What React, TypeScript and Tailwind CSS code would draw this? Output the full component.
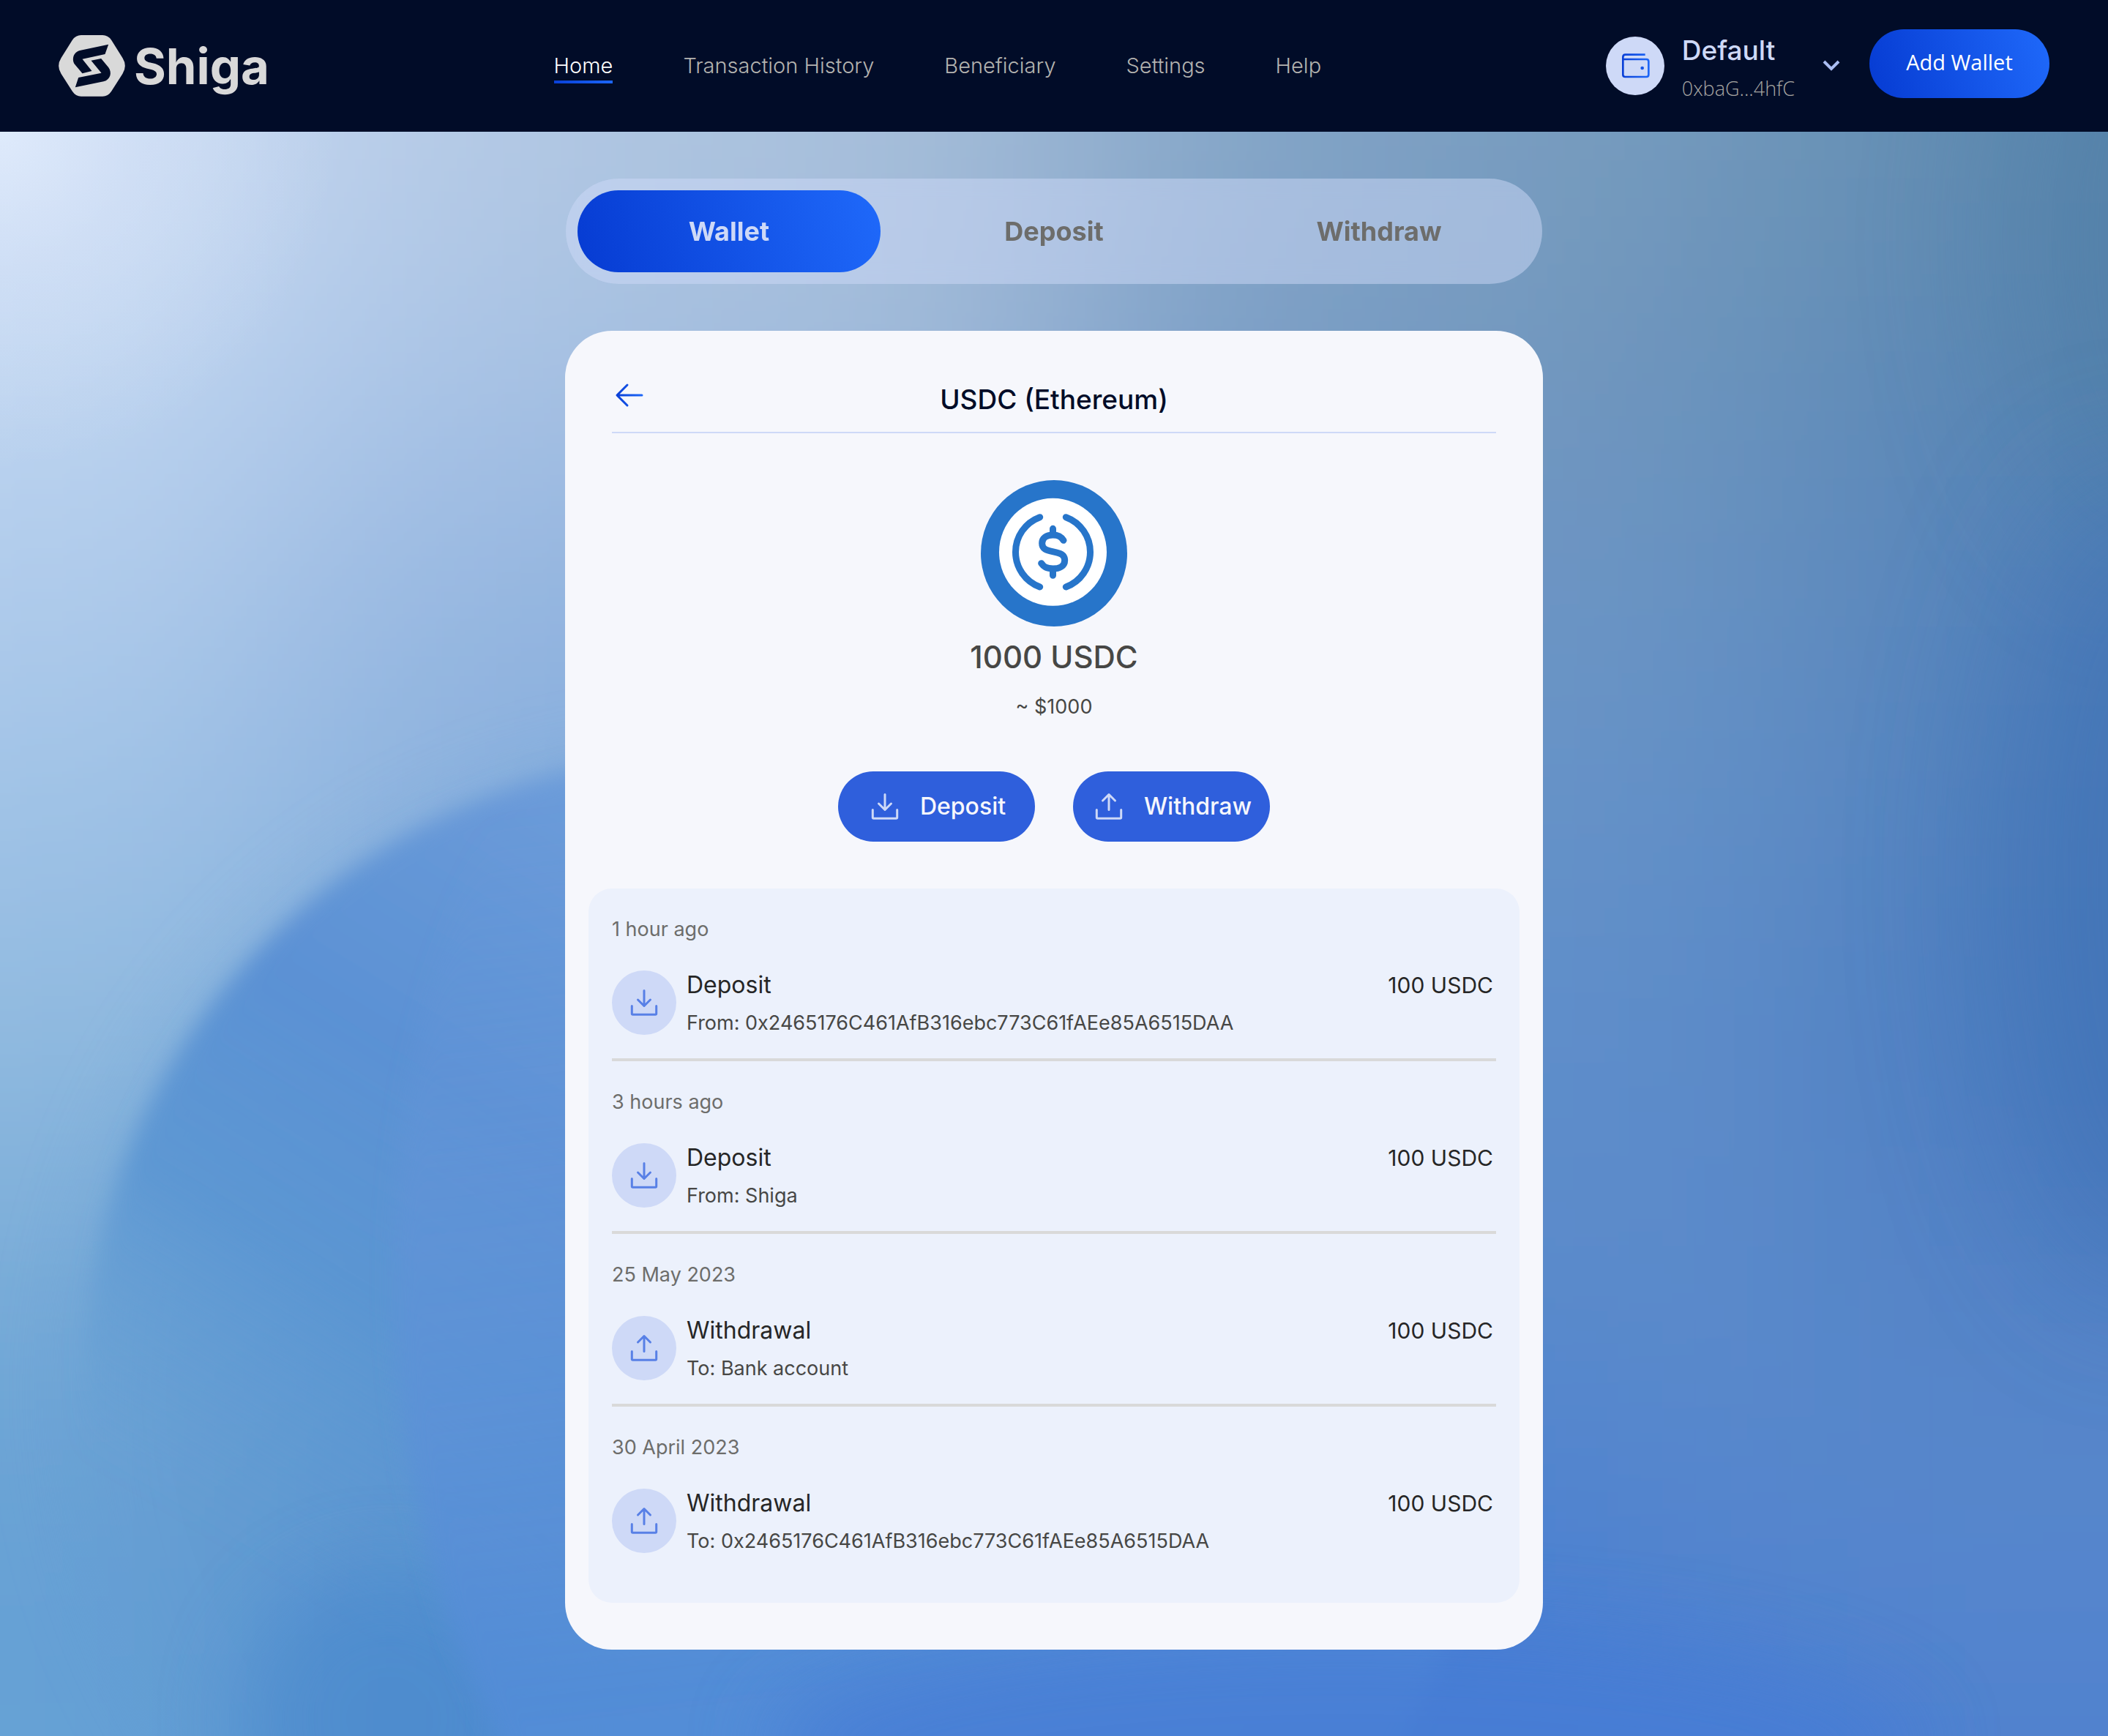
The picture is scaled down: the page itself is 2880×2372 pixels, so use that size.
import React from "react";

type Kind = "deposit" | "withdraw";

interface Activity {
  when: string;
  kind: Kind;
  title: string;
  detail: string;
  amount: string;
}

const NAV_ITEMS = ["Home", "Transaction History", "Beneficiary", "Settings", "Help"];

const TABS = ["Wallet", "Deposit", "Withdraw"];

const ACTIVITY: Activity[] = [
  {
    when: "1 hour ago",
    kind: "deposit",
    title: "Deposit",
    detail: "From: 0x2465176C461AfB316ebc773C61fAEe85A6515DAA",
    amount: "100 USDC",
  },
  {
    when: "3 hours ago",
    kind: "deposit",
    title: "Deposit",
    detail: "From: Shiga",
    amount: "100 USDC",
  },
  {
    when: "25 May 2023",
    kind: "withdraw",
    title: "Withdrawal",
    detail: "To: Bank account",
    amount: "100 USDC",
  },
  {
    when: "30 April 2023",
    kind: "withdraw",
    title: "Withdrawal",
    detail: "To: 0x2465176C461AfB316ebc773C61fAEe85A6515DAA",
    amount: "100 USDC",
  },
];

/* Colour mesh behind the page: each row runs left to right, rows run top to bottom. */
const MESH = [
  ["#cbdcf4", "#b8cce7", "#aec5e0", "#a6bdd9", "#88a9c9", "#7c9fc2", "#7299bb", "#608bb0"],
  ["#bfd5f0", "#abc6e8", "#a6c0e0", "#a2bbd9", "#7c9fc8", "#769abf", "#6b93bb", "#5a87b4"],
  ["#afcbeb", "#99b8e0", "#90b2e0", "#8fb0dc", "#7a9ecb", "#6e96c4", "#6792c2", "#5583ba"],
  ["#9fc2e6", "#8cb2df", "#84aede", "#78a2d8", "#7099cf", "#6893c8", "#6290c8", "#5080bd"],
  ["#8fb9df", "#80addb", "#6c9cd8", "#6a98d4", "#6292d0", "#5f8ecb", "#5c8bc9", "#4c7cc0"],
  ["#78acd8", "#6099d4", "#5a90d6", "#588cd2", "#568ace", "#5a8aca", "#5d8ccb", "#5282c6"],
  ["#66a0d4", "#5692d2", "#5088d4", "#4c84d4", "#487fd4", "#4c82d2", "#5686cc", "#5988cc"],
  ["#66a2d6", "#4f8dd0", "#508ad6", "#4a82d6", "#477ed6", "#457cd3", "#4a7fd2", "#5081cf"],
];

function Backdrop() {
  return (
    <svg
      aria-hidden="true"
      className="absolute inset-0 h-full w-full"
      viewBox="0 0 1568 1193"
      preserveAspectRatio="none"
    >
      <defs>
        <filter id="meshBlur" filterUnits="userSpaceOnUse" x="-500" y="-500" width="2568" height="2193">
          <feGaussianBlur stdDeviation="95" />
        </filter>
        <filter id="edgeBlur" x="-20%" y="-20%" width="140%" height="140%">
          <feGaussianBlur stdDeviation="8" />
        </filter>
        <filter id="wideBlur" x="-50%" y="-50%" width="200%" height="200%">
          <feGaussianBlur stdDeviation="30" />
        </filter>
        <filter id="sideBlur" filterUnits="userSpaceOnUse" x="1200" y="-400" width="700" height="1700">
          <feGaussianBlur stdDeviation="55" />
        </filter>
        <radialGradient id="corner" gradientUnits="userSpaceOnUse" cx="0" cy="0" r="250">
          <stop offset="0" stopColor="#e4eefd" stopOpacity="0.8" />
          <stop offset="0.4" stopColor="#dfe9fb" stopOpacity="0.4" />
          <stop offset="1" stopColor="#dfe9fb" stopOpacity="0" />
        </radialGradient>
        <linearGradient id="orb" gradientUnits="userSpaceOnUse" x1="420" y1="470" x2="60" y2="1060">
          <stop offset="0" stopColor="#6d9cda" />
          <stop offset="0.35" stopColor="#5b91d4" />
          <stop offset="0.6" stopColor="#5894d2" stopOpacity="0.85" />
          <stop offset="0.9" stopColor="#5f9cd2" stopOpacity="0" />
        </linearGradient>
        <linearGradient id="innerOrb" gradientUnits="userSpaceOnUse" x1="300" y1="520" x2="380" y2="1190">
          <stop offset="0" stopColor="#6a99dc" stopOpacity="0" />
          <stop offset="0.4" stopColor="#6393d9" stopOpacity="0.5" />
          <stop offset="1" stopColor="#528cd7" stopOpacity="0.95" />
        </linearGradient>
      </defs>
      <g filter="url(#meshBlur)">
        {MESH.map((row, r) =>
          row.map((color, c) => {
            const left = c === 0 ? -500 : c * 196;
            const right = c === 7 ? 2068 : (c + 1) * 196;
            const top = r === 0 ? -500 : -85 + r * 170;
            const bottom = r === 7 ? 1693 : 85 + r * 170;
            return (
              <rect
                key={`${r}-${c}`}
                x={left}
                y={top}
                width={right - left + 1}
                height={bottom - top + 1}
                fill={color}
              />
            );
          }),
        )}
      </g>
      <rect width="260" height="260" fill="url(#corner)" />
      <ellipse cx="1610" cy="80" rx="110" ry="230" fill="#4c7aa2" opacity="0.5" filter="url(#sideBlur)" />
      <ellipse cx="1600" cy="560" rx="110" ry="300" fill="#3d6fb4" opacity="0.6" filter="url(#sideBlur)" />
      <circle cx="525" cy="938" r="474" fill="#669bd0" opacity="0.28" filter="url(#wideBlur)" />
      <circle cx="532" cy="933" r="470" fill="url(#orb)" filter="url(#edgeBlur)" />
      <ellipse cx="290" cy="1180" rx="110" ry="110" fill="#4486cc" opacity="0.5" filter="url(#wideBlur)" />
      <ellipse cx="708" cy="850" rx="415" ry="590" fill="url(#innerOrb)" filter="url(#edgeBlur)" />
      <ellipse cx="1000" cy="1200" rx="430" ry="90" fill="#467dd5" opacity="0.8" filter="url(#wideBlur)" />
    </svg>
  );
}

function ShigaMark() {
  return (
    <svg aria-hidden="true" className="h-[84px] w-[91px]" viewBox="60 84 272 252">
      <path
        fill="#d9d9d9"
        d="M152 84H240Q262 84 276 104L322 178Q342 210 322 242L276 314Q262 335 240 335H152Q130 335 116 314L70 242Q50 210 70 178L116 104Q130 84 152 84Z"
      />
      <path
        fill="#010c28"
        d="M264 122L250 162L157 182L196 231L157 241L126 204C114 188 116 153 150 146Z"
      />
      <path
        fill="#010c28"
        d="M128 298L141 258L235 239L193 188L234 180L264 216C280 238 272 267 244 274Z"
      />
    </svg>
  );
}

function WalletGlyph() {
  return (
    <svg aria-hidden="true" className="h-10 w-11" viewBox="66 90 132 120" fill="none">
      <defs>
        <linearGradient id="walletStroke" gradientUnits="userSpaceOnUse" x1="78" y1="0" x2="192" y2="0">
          <stop offset="0" stopColor="#0a3fd6" />
          <stop offset="1" stopColor="#1e68f8" />
        </linearGradient>
      </defs>
      <path
        d="M173 104H92Q82 104 82 114V186Q82 195 91 195H178Q187 195 187 186V132Q187 123 178 123H84"
        stroke="url(#walletStroke)"
        strokeWidth="8"
      />
      <circle cx="161" cy="159" r="7" fill="#1455e8" />
    </svg>
  );
}

function TrayIcon({ kind, className }: { kind: Kind; className: string }) {
  return (
    <svg
      aria-hidden="true"
      className={className}
      viewBox="0 0 48 48"
      fill="none"
      stroke="currentColor"
      strokeLinecap="round"
      strokeLinejoin="round"
    >
      <path d="M7.3 28.5V39Q7.3 40.3 8.6 40.3H39.4Q40.7 40.3 40.7 39V28.5" />
      {kind === "deposit" ? (
        <path d="M24 7.5V28M15.5 20L24 28.5L32.5 20" />
      ) : (
        <path d="M24 28.5V8M15.5 16L24 7.5L32.5 16" />
      )}
    </svg>
  );
}

function UsdcLogo() {
  return (
    <svg role="img" aria-label="USDC" className="size-[200px]" viewBox="120 78 600 600" fill="none">
      <circle cx="420" cy="378" r="300" fill="#2775ca" />
      <circle cx="415.5" cy="373" r="220.5" fill="#fff" />
      <g stroke="#2775ca" strokeWidth="27" strokeLinecap="round" strokeLinejoin="round">
        <path d="M362 230A152.500 152.500 0 0 0 362 516" />
        <path d="M469 230A152.500 152.500 0 0 1 469 516" />
        <path d="M459 325C449 309 438 303 415 303C388 303 371 316 371 337C371 360 388 366 417 371.500C446 377 464 384 464 407C464 430 442 441 416 441C388 441 378 433 368 419" />
        <path d="M415.500 277V300M415.500 444V469" />
      </g>
    </svg>
  );
}

function Header() {
  return (
    <header className="flex min-h-[180px] items-center justify-between bg-[#010c28] px-20">
      <a href="#" className="flex items-center gap-3 text-[67px] leading-none font-bold text-[#d9d9d9]">
        <ShigaMark />
        Shiga
      </a>

      <nav aria-label="Main" className="flex items-center gap-24">
        {NAV_ITEMS.map((item, i) => (
          <a
            key={item}
            href="#"
            aria-current={i === 0 ? "page" : undefined}
            className={
              i === 0
                ? "relative text-[29px] leading-10 font-light text-white"
                : "text-[29px] leading-10 font-light text-[#b4b3b0]"
            }
          >
            {item}
            {i === 0 && (
              <span className="absolute top-full left-0 h-1 w-full bg-linear-to-r from-[#0a40d8] to-[#1d66f7]" />
            )}
          </a>
        ))}
      </nav>

      <div className="flex items-center gap-9">
        <button type="button" className="flex items-center text-left">
          <span className="flex size-20 items-center justify-center rounded-full bg-[#ced9f7]">
            <WalletGlyph />
          </span>
          <span className="ml-6 flex flex-col gap-1 pt-2.5">
            <span className="text-[37px] leading-12 font-medium text-[#ced9f7]">Default</span>
            <span className="font-['Open_Sans',sans-serif] text-[27px] leading-12 font-light text-[#a6a5a2]">
              0xbaG...4hfC
            </span>
          </span>
          <svg
            aria-hidden="true"
            className="ml-[34px] size-8 text-[#aabdf2]"
            viewBox="0 0 32 32"
            fill="none"
            stroke="currentColor"
            strokeWidth="4"
          >
            <path d="M6 10L16 20L26 10" />
          </svg>
        </button>
        <button
          type="button"
          className="mb-1.5 h-[94px] w-[246px] rounded-full bg-linear-[74deg] from-[#063bd2] to-[#1f69fa] pb-1 font-['Open_Sans',sans-serif] text-[29px] font-medium text-white"
        >
          Add Wallet
        </button>
      </div>
    </header>
  );
}

function TabBar() {
  return (
    <div
      role="tablist"
      aria-label="Wallet actions"
      className="grid w-full max-w-[1334px] grid-cols-3 gap-[30px] rounded-full bg-[#ced9f7]/50 p-4 backdrop-blur-md"
    >
      {TABS.map((tab, i) => (
        <button
          key={tab}
          type="button"
          role="tab"
          aria-selected={i === 0}
          className={
            i === 0
              ? "h-28 rounded-full bg-linear-[74deg] from-[#063bd2] to-[#1f69fa] text-[36px] font-bold text-[#ced9f7]"
              : "h-28 rounded-full text-[36px] font-bold text-[#6d6d6b]"
          }
        >
          {tab}
        </button>
      ))}
    </div>
  );
}

function ActionButton({ kind, label }: { kind: Kind; label: string }) {
  return (
    <button
      type="button"
      className="flex h-24 w-[269px] items-center justify-center gap-6 rounded-full bg-[#2f5fdc] text-[32px] font-medium text-[#f6f7fc]"
    >
      <TrayIcon kind={kind} className="size-12 stroke-3 text-[#ced9f7]" />
      {label}
    </button>
  );
}

function ActivityItem({ item, last }: { item: Activity; last: boolean }) {
  return (
    <li className={last ? "pt-9 pb-16" : "border-b-4 border-[#d9d9d9] pt-9 pb-7"}>
      <p className="text-[27px] leading-10 text-[#6d6d6b]">{item.when}</p>
      <div className="mt-9 flex items-start">
        <span className="flex size-[88px] shrink-0 items-center justify-center rounded-full bg-[#ced9f7]">
          <TrayIcon kind={item.kind} className="size-12 stroke-3 text-[#5880e6]" />
        </span>
        <div className="ml-3.5 flex min-w-0 flex-1 flex-col gap-3">
          <p className="text-[32px] leading-10 text-[#262626]">{item.title}</p>
          <p className="text-[27px] leading-10 break-words text-[#474745]">{item.detail}</p>
        </div>
        <p className="pr-1 text-[30px] leading-10 text-[#262626]">{item.amount}</p>
      </div>
    </li>
  );
}

function AssetCard() {
  return (
    <section className="mt-16 w-full max-w-[1336px] rounded-[64px] bg-[#f6f7fc] px-8 py-16">
      <div className="mx-8 grid grid-cols-[48px_1fr_48px] items-start border-b-2 border-[#ced9f7] pb-3.5">
        <button type="button" aria-label="Back">
          <svg aria-hidden="true" className="size-12" viewBox="0 0 48 48" fill="none">
            <defs>
              <linearGradient id="backStroke" gradientUnits="userSpaceOnUse" x1="6" y1="0" x2="42" y2="0">
                <stop offset="0" stopColor="#0a3fd6" />
                <stop offset="1" stopColor="#1e68f8" />
              </linearGradient>
            </defs>
            <path
              d="M41 24H7.500M21 10L7 24L21 38"
              stroke="url(#backStroke)"
              strokeWidth="3"
              strokeLinecap="round"
              strokeLinejoin="round"
            />
          </svg>
        </button>
        <h1 className="text-center text-[37px] leading-[60px] font-medium text-[#010c28]">USDC (Ethereum)</h1>
      </div>

      <div className="mt-16 flex flex-col items-center">
        <UsdcLogo />
        <p className="mt-2 text-[42px] leading-[68px] font-medium text-[#474745]">1000 USDC</p>
        <p className="mt-3.5 text-[27px] leading-10 text-[#474745]">~ $1000</p>
        <div className="mt-17 flex flex-wrap justify-center gap-13">
          <ActionButton kind="deposit" label="Deposit" />
          <ActionButton kind="withdraw" label="Withdraw" />
        </div>
      </div>

      <ul className="mt-16 rounded-4xl bg-[#ecf1fc] px-8">
        {ACTIVITY.map((item, i) => (
          <ActivityItem key={item.when} item={item} last={i === ACTIVITY.length - 1} />
        ))}
      </ul>
    </section>
  );
}

export default function App() {
  return (
    <div className="flex min-h-screen flex-col font-['Inter',sans-serif]">
      <Header />
      <main className="relative flex-1 overflow-hidden bg-[#6f99cf]">
        <Backdrop />
        <div className="relative flex flex-col items-center px-8 pt-16 pb-28">
          <TabBar />
          <AssetCard />
        </div>
      </main>
    </div>
  );
}
